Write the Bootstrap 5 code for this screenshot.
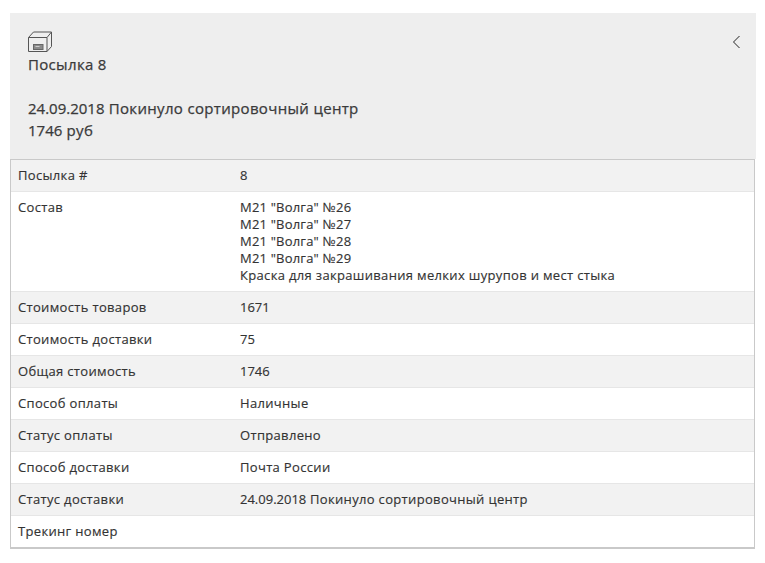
<!DOCTYPE html>
<html lang="ru">
<head>
<meta charset="utf-8">
<title>Посылка 8</title>
<link href="https://cdn.jsdelivr.net/npm/bootstrap@5.3.0/dist/css/bootstrap.min.css" rel="stylesheet">
<style>
html,body{background:#fff;}
body{font-family:"Open Sans","Liberation Sans",sans-serif;font-size:13px;color:#333;padding:13px 9px 0 10px;letter-spacing:.33px;}
.parcel-head{background:#eee;height:146px;padding:17px 14px 0 18px;font-size:15px;line-height:22px;color:#3a3a3a;font-weight:500;-webkit-text-stroke:.25px #3a3a3a;}
.parcel-icon{display:block;width:25px;height:23px;}
.parcel-gap{height:22px;}
.parcel-back{margin:5px 0 0 0;width:10px;height:14px;}
.parcel-num{letter-spacing:0;}
.parcel-lines{letter-spacing:.2px;}
.parcel-table{border:1px solid #c9c9c9;border-bottom-width:2px;width:745px;margin:0;line-height:17px;table-layout:fixed;border-collapse:separate;border-spacing:0;}
.parcel-table td{padding:7px 8px 7px 7px;border-top:1px solid #e6e6e6;color:#333;background:#fff;font-size:13px;height:32px;vertical-align:top;font-weight:500;-webkit-text-stroke:.15px #333;}
.parcel-table tr:first-child td{border-top:0;height:31px;}
.parcel-table tr:nth-child(odd) td{background:#f2f2f2;}
.parcel-table td:first-child{width:222px;}
</style>
</head>
<body>
<div class="parcel-head d-flex justify-content-between">
  <div>
    <svg class="parcel-icon" viewBox="0 0 25 23" fill="none" stroke="#555" stroke-width="1">
      <path d="M.5 7.500h18.500v14h-18.500z"/>
      <path d="M.5 7.500l5-5.500h18l-4.500 5.500M23.500 2v14.500l-4.500 5"/>
      <rect x="5.500" y="14.500" width="9.500" height="5" fill="#8a8a8a" stroke="#666"/>
      <path d="M7.500 16.500h4" stroke="#ccc"/>
    </svg>
    <div>Посылка <span class="parcel-num">8</span></div>
    <div class="parcel-gap"></div>
    <div><span class="parcel-num">24.09.2018</span> Покинуло сортировочный центр</div>
    <div><span class="parcel-num">1746</span> руб</div>
  </div>
  <svg class="parcel-back" viewBox="0 0 10 14" fill="none" stroke="#222" stroke-width="1"><path d="M7.500 1L1.500 7l6 6"/></svg>
</div>
<table class="parcel-table">
  <tbody>
    <tr><td>Посылка #</td><td>8</td></tr>
    <tr><td>Состав</td><td><span class="parcel-lines">М21 "Волга" №26<br>М21 "Волга" №27<br>М21 "Волга" №28<br>М21 "Волга" №29</span><br>Краска для закрашивания мелких шурупов и мест стыка</td></tr>
    <tr><td>Стоимость товаров</td><td class="parcel-num">1671</td></tr>
    <tr><td>Стоимость доставки</td><td class="parcel-num">75</td></tr>
    <tr><td>Общая стоимость</td><td class="parcel-num">1746</td></tr>
    <tr><td>Способ оплаты</td><td>Наличные</td></tr>
    <tr><td>Статус оплаты</td><td>Отправлено</td></tr>
    <tr><td>Способ доставки</td><td>Почта России</td></tr>
    <tr><td>Статус доставки</td><td><span class="parcel-num">24.09.2018</span> Покинуло сортировочный центр</td></tr>
    <tr><td>Трекинг номер</td><td></td></tr>
  </tbody>
</table>
<script src="https://cdn.jsdelivr.net/npm/bootstrap@5.3.0/dist/js/bootstrap.bundle.min.js"></script>
</body>
</html>
